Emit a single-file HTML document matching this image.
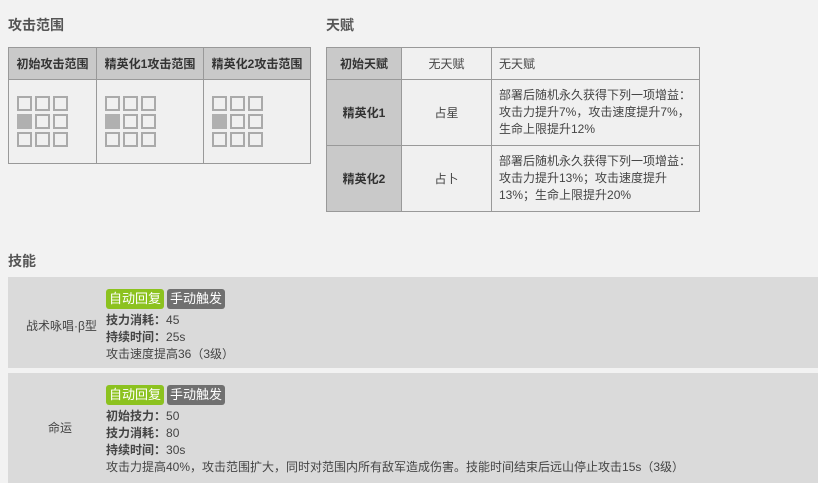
<!DOCTYPE html>
<html><head><meta charset="utf-8"><style>
*{margin:0;padding:0;box-sizing:border-box}
body{width:818px;height:483px;background:#f2f2f2;font-family:"Liberation Sans","Noto Sans CJK SC",sans-serif;font-size:12px;color:#444;position:relative;overflow:hidden}
.h{position:absolute;font-size:14px;font-weight:bold;color:#555}
.a{position:absolute}
table{border-collapse:collapse;position:absolute}
td{border:1px solid #999;background:#f0f0f0}
.th{background:#c9c9c9;font-weight:bold;color:#333;text-align:center}
.sq{position:absolute;width:15px;height:15px;border:2px solid #aaa}
.sq.f{background:#b0b0b0;border-color:#b0b0b0}
.row{position:absolute;left:8px;width:810px;background:#dadada}
.tags{height:22px;margin-bottom:1px}
.tag{display:inline-block;color:#fff;padding:0 3px;height:20px;line-height:20px;border-radius:3px;font-size:13px;margin-right:3px}
.g{background:#8cc21f}.d{background:#707070}
b{color:#444}
</style></head><body>
<div class="h" style="left:8px;top:15px">攻击范围</div>
<div class="h" style="left:326px;top:15px">天赋</div>
<table style="left:8px;top:47px;width:303px">
<tr style="height:32px"><td class="th" style="width:88px">初始攻击范围</td><td class="th" style="width:107px">精英化1攻击范围</td><td class="th">精英化2攻击范围</td></tr>
<tr style="height:84px"><td></td><td></td><td></td></tr>
</table>
<div id="g"></div>
<table style="left:326px;top:47px;width:374px">
<tr style="height:32px"><td class="th" style="width:75px">初始天赋</td><td style="width:90px;text-align:center">无天赋</td><td style="padding-left:7px">无天赋</td></tr>
<tr style="height:66px"><td class="th">精英化1</td><td style="text-align:center">占星</td><td style="padding-left:7px;line-height:17px">部署后随机永久获得下列一项增益：<br>攻击力提升7%，攻击速度提升7%，<br>生命上限提升12%</td></tr>
<tr style="height:66px"><td class="th">精英化2</td><td style="text-align:center">占卜</td><td style="padding-left:7px;line-height:17px">部署后随机永久获得下列一项增益：<br>攻击力提升13%；攻击速度提升<br>13%；生命上限提升20%</td></tr>
</table>
<div class="h" style="left:8px;top:251px">技能</div>
<div class="row" style="top:277px;height:91px">
<div class="a" style="left:18px;top:40px">战术咏唱·β型</div>
<div class="a" style="left:98px;top:12px;line-height:17px"><div class="tags"><span class="tag g">自动回复</span><span class="tag d">手动触发</span></div><b>技力消耗：</b>45<br><b>持续时间：</b>25s<br>攻击速度提高36（3级）</div>
</div>
<div class="row" style="top:373px;height:110px">
<div class="a" style="left:40px;top:46px">命运</div>
<div class="a" style="left:98px;top:12px;line-height:17px"><div class="tags"><span class="tag g">自动回复</span><span class="tag d">手动触发</span></div><b>初始技力：</b>50<br><b>技力消耗：</b>80<br><b>持续时间：</b>30s<br>攻击力提高40%，攻击范围扩大，同时对范围内所有敌军造成伤害。技能时间结束后远山停止攻击15s（3级）</div>
</div>
<script>
var xs=[17,105,212],h='';
xs.forEach(function(x){for(var r=0;r<3;r++)for(var c=0;c<3;c++){h+='<div class="sq'+(r==1&&c==0?' f':'')+'" style="left:'+(x+c*18)+'px;top:'+(96+r*18)+'px"></div>';}});
document.getElementById('g').innerHTML=h;
</script>
</body></html>
